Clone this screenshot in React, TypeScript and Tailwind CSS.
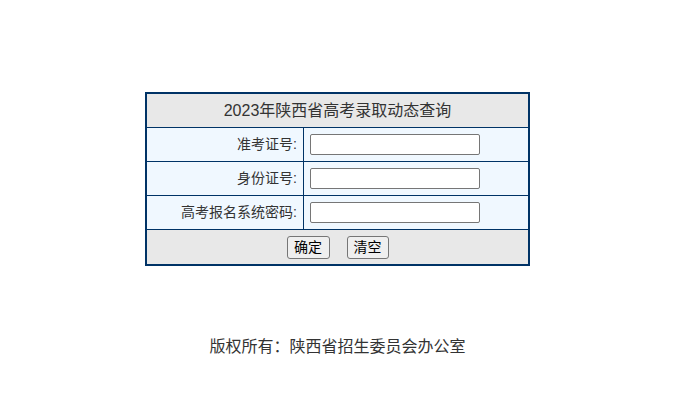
import React from "react";

const rows = ["准考证号:", "身份证号:", "高考报名系统密码:"];

const App = () => {
  return (
    <div
      className="w-[675px] flex flex-col items-center pt-[92px] text-[#333333]"
      style={{ fontFamily: '"Liberation Sans", "Noto Sans CJK SC", sans-serif' }}
    >
      <div className="w-[385px] border-2 border-[#003366]">
        <div className="h-[34px] border-b border-[#003366] bg-[#e8e8e8] flex items-center justify-center text-[16px]">
          2023年陕西省高考录取动态查询
        </div>

        {rows.map((label) => (
          <div key={label} className="h-[34px] border-b border-[#003366] bg-[#f0f8ff] flex">
            <div className="w-[157px] border-r border-[#003366] flex items-center justify-end pr-[6px] text-[14px]">
              {label}
            </div>
            <div className="flex-1 flex items-center pl-[6px]">
              <input
                type="text"
                className="w-[170px] h-[21px] bg-white border border-[#767676] rounded-[2px] outline-none"
              />
            </div>
          </div>
        ))}

        <div className="h-[34px] bg-[#e8e8e8] flex items-center justify-center gap-[17px]">
          <button className="w-[43px] h-[23px] bg-[#efefef] border border-[#767676] rounded-[3px] text-[14px] text-black leading-none">
            确定
          </button>
          <button className="w-[42px] h-[23px] bg-[#efefef] border border-[#767676] rounded-[3px] text-[14px] text-black leading-none">
            清空
          </button>
        </div>
      </div>

      <div className="mt-[72px] text-[16px] leading-[18px]">版权所有：陕西省招生委员会办公室</div>
    </div>
  );
};

export default App;
